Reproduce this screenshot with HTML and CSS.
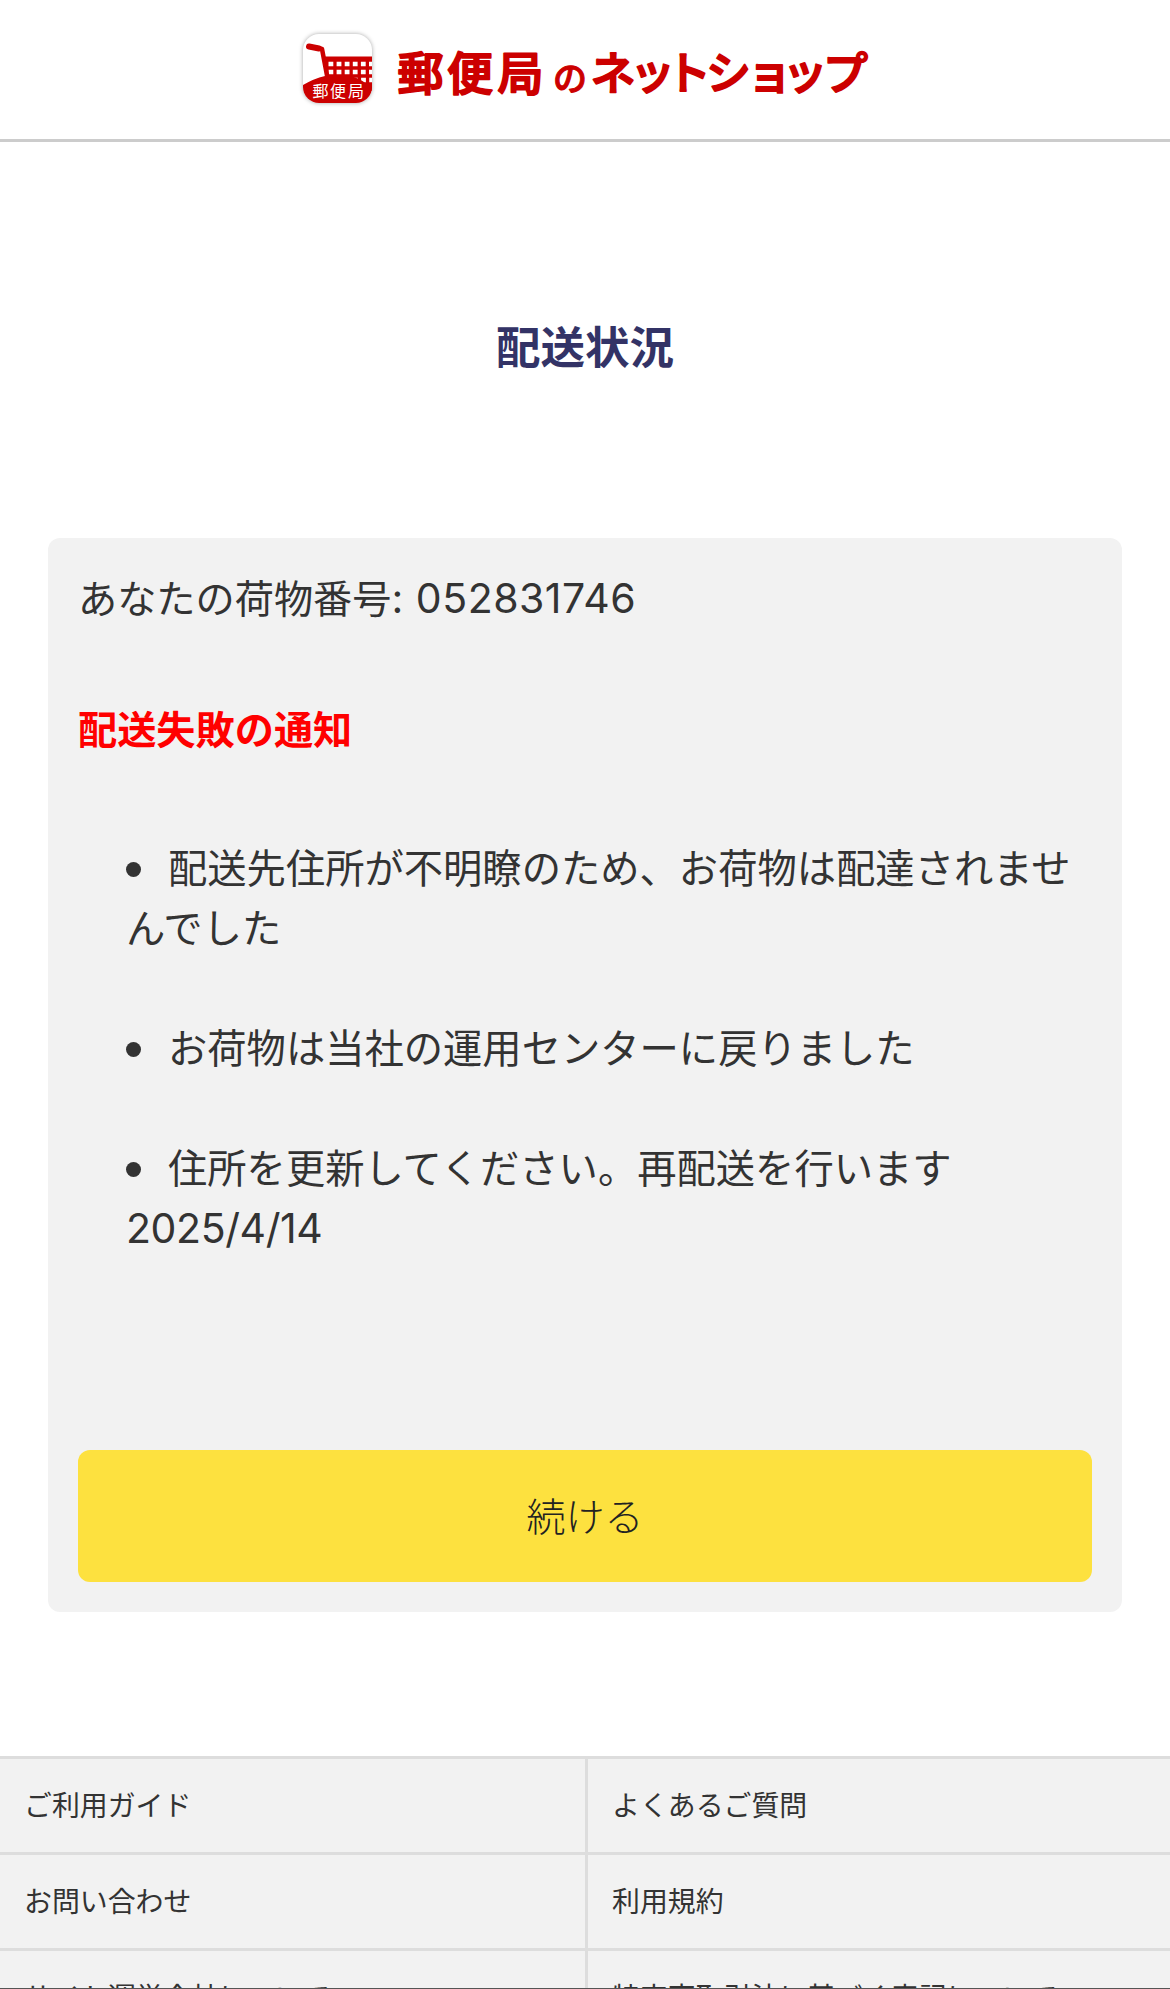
FILE: index.html
```html
<!DOCTYPE html>
<html lang="ja">
<head>
    <meta charset="UTF-8">
    <title>配送状況</title>
    <link rel="stylesheet" href="styles.css">
</head>
<body>
<header class="header">
    <svg class="logo" width="580" height="84" viewBox="0 0 580 84">
        <defs>
            <clipPath id="tile"><rect x="8" y="8" width="69" height="69" rx="16"/></clipPath>
        </defs>
        <rect class="tile" x="8" y="8" width="69" height="69" rx="16"/>
        <g clip-path="url(#tile)">
            <path class="red" d="M29 30.500H78V65H35Z"/>
            <path class="cells" d="M33.500 38H78M33.500 46H78M58 54H78"/>
            <path class="handle-grip" d="M14 20.500L24 22.500"/>
            <path class="handle" d="M14 20.500L27 23L32.500 52"/>
            <path class="red" d="M5 61Q17 53 30 50Q42 48 56 50Q63 52 69 56Q72 60 75 61L78 60V80H5Z"/>
            <text class="tile-text" x="17.500 35 53" y="71">郵便局</text>
        </g>
        <text class="name" x="102.500 152 202.500" y="63.500">郵便局</text>
        <text class="name-no" x="258" y="65">の</text>
        <text class="name-kana" x="295.500 335 371 411 452 487.500 528" y="64">ネットショップ</text>
    </svg>
</header>
<main class="main">
    <h1 class="title">配送状況</h1>
    <div class="card">
        <p class="number">あなたの荷物番号<span class="latin">: 052831746</span></p>
        <p class="notice">配送失敗の通知</p>
        <ul class="list">
            <li>配送先住所が不明瞭のため、お荷物は配達されませんでした</li>
            <li>お荷物は当社の運用センターに戻りました</li>
            <li>住所を更新してください。再配送を行います<br><span class="latin date">2025/4/14</span></li>
        </ul>
        <button class="btn" type="button">続ける</button>
    </div>
</main>
<footer class="footer">
    <ul class="links">
        <li>ご利用ガイド</li>
        <li>よくあるご質問</li>
        <li>お問い合わせ</li>
        <li>利用規約</li>
        <li>サイト運営会社について</li>
        <li>特定商取引法に基づく表記について</li>
    </ul>
</footer>
</body>
</html>
```
FILE: styles.css
```css
* {
    margin: 0;
    padding: 0;
    box-sizing: border-box;
}

body {
    display: flex;
    flex-direction: column;
    height: 1989px;
    overflow: hidden;
    background: #fff;
    color: #333;
    font-family: "Noto Sans CJK JP", sans-serif;
    font-size: 39.200px;
    line-height: 60px;
}

ul {
    list-style: none;
}

.header {
    flex: none;
    height: 142px;
    padding: 26px 0 0 295px;
    border-bottom: 3px solid #ccc;
}

.logo {
    display: block;
}

.tile {
    fill: #fff;
    filter: drop-shadow(0 0 2px rgba(0, 0, 0, .35));
}

.red {
    fill: #c00;
}

.cells {
    fill: none;
    stroke: #fff;
    stroke-width: 4.500;
    stroke-dasharray: 4.800 3.300;
}

.handle,
.handle-grip {
    fill: none;
    stroke: #c00;
    stroke-width: 4.500;
    stroke-linecap: round;
    stroke-linejoin: round;
}

.handle-grip {
    stroke-width: 6;
}

.tile-text {
    fill: #fff;
    font-size: 16px;
}

.name,
.name-no,
.name-kana {
    fill: #c00;
    stroke: #c00;
    stroke-width: 1.900;
    stroke-linejoin: round;
    font-size: 46px;
    font-weight: 500;
}

.name-no {
    stroke-width: 1;
    font-size: 34px;
}

.name-kana {
    font-size: 45px;
}

.main {
    flex: none;
    height: 1614px;
    padding: 0 48px;
}

.title {
    padding: 173px 0 163px;
    color: #336;
    font-size: 44.500px;
    font-weight: 700;
    text-align: center;
}

.card {
    height: 1074px;
    padding: 28px 30px 30px;
    border-radius: 12px;
    background: #f2f2f2;
}

.latin {
    font-family: Inter, sans-serif;
    font-size: 41px;
    letter-spacing: .5px;
}

.date {
    letter-spacing: -.4px;
}

.notice {
    margin: 69px 0 79px;
    color: #f00;
    font-weight: 700;
}

.list {
    padding-left: 48px;
    font-size: 39.300px;
}

.list li {
    margin-bottom: 60px;
}

.list li::before {
    content: "";
    display: inline-block;
    width: 15px;
    height: 15px;
    margin-right: 27px;
    border-radius: 50%;
    background: #333;
    vertical-align: 6px;
}

.btn {
    display: block;
    width: 100%;
    height: 132px;
    margin-top: 192px;
    padding-bottom: 4px;
    border: 0;
    border-radius: 12px;
    background: #fde13f;
    color: #222;
    font: 300 39px "Noto Sans CJK JP", sans-serif;
}

.footer {
    height: 233px;
    overflow: hidden;
    border-bottom: 1px solid #555;
}

.links {
    display: grid;
    grid-template-columns: 588px 1fr;
    background: #f2f2f2;
    font-size: 27.900px;
}

.links li {
    height: 96px;
    padding: 15px 24px 0;
    border-top: 3px solid #ddd;
}

.links li:nth-child(odd) {
    border-right: 3px solid #ddd;
}
```
